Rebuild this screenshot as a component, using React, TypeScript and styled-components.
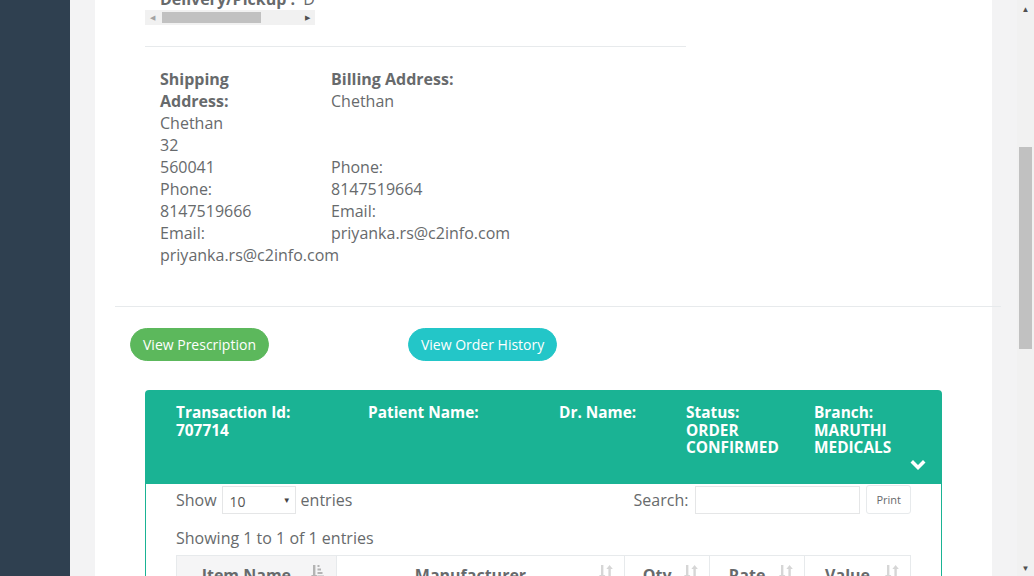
import React, { useLayoutEffect, useRef, useState } from "react";
import styled, { createGlobalStyle } from "styled-components";

const GlobalStyle = createGlobalStyle`
  * { box-sizing: border-box; }
  html, body { margin: 0; padding: 0; }
  body {
    font-family: "Open Sans", "Liberation Sans", sans-serif;
    font-size: 16px;
    color: #676a6c;
    background: #f3f3f4;
    padding-right: 17px;
  }
`;

const Layout = styled.div`
  display: flex;
  min-height: 1545px;
`;

const SideNav = styled.nav`
  width: 70px;
  flex-shrink: 0;
  background: #2f4050;
`;

const PageWrapper = styled.main`
  flex: 1;
  min-width: 0;
  display: flex;
  flex-direction: column;
  padding: 0 25px;
`;

const TopBar = styled.header`
  height: 60px;
  border-bottom: 1px solid #e7eaec;
  margin: 0 -25px 20px;
`;

const Card = styled.section`
  flex: 1;
  background: #fff;
  padding: 20px 20px 40px;
`;

const InfoBlock = styled.div`
  width: 541px;
  margin: 0 30px;
`;

const Title = styled.h3`
  margin: 23px 0 20px;
  padding: 0 15px;
  font-size: 18px;
  font-weight: 600;
`;

const InfoRow = styled.div`
  padding: 0 15px;
  line-height: 22px;
  margin-bottom: 10px;
`;

const ScrollRow = styled.div`
  width: 170px;
  overflow: hidden;
  white-space: nowrap;
  padding-left: 15px;
  line-height: 22px;
`;

const Label = styled.b`
  font-weight: 700;
`;

/* the browser hides real scrollbars, so the classic ones are drawn */
const HBar = styled.div`
  width: 170px;
  height: 15px;
  background: #f1f1f1;
  display: flex;
  align-items: center;
`;

const HArrow = styled.span<{ $dim?: boolean }>`
  width: 15px;
  height: 15px;
  display: flex;
  align-items: center;
  justify-content: center;
  color: ${({ $dim }) => ($dim ? "#a3a3a3" : "#505050")};
  font-size: 7px;
`;

const HThumb = styled.span`
  width: 99px;
  height: 11px;
  margin-left: 2px;
  background: #c1c1c1;
`;

const HGap = styled.span`
  flex: 1;
`;

const Rule = styled.hr`
  border: 0;
  border-top: 1px solid #e7eaec;
  margin: 21px 0;
`;

const AddressGrid = styled.div`
  display: grid;
  grid-template-columns: 171px auto;
  padding-left: 15px;
  line-height: 22px;
`;

const AddressCol = styled.div<{ $narrow?: boolean }>`
  display: flex;
  flex-direction: column;
  padding-right: ${({ $narrow }) => ($narrow ? "50px" : "0")};
  white-space: ${({ $narrow }) => ($narrow ? "normal" : "nowrap")};
`;

const AddressHead = styled.strong`
  font-weight: 700;
`;

const Blank = styled.span`
  height: 22px;
`;

const WideRule = styled.hr`
  border: 0;
  border-top: 1px solid #e7eaec;
  margin: 40px -29px 21px 0;
`;

const ButtonRow = styled.div`
  display: flex;
  gap: 139px;
  padding-left: 15px;
`;

const PillButton = styled.button<{ $tone: "success" | "info" }>`
  height: 33px;
  padding: 0 12px;
  border-radius: 17px;
  border: 1px solid ${({ $tone }) => ($tone === "success" ? "#5cb85c" : "#23c6c8")};
  background: ${({ $tone }) => ($tone === "success" ? "#5cb85c" : "#23c6c8")};
  color: #fff;
  font-family: "Open Sans", "Liberation Sans", sans-serif;
  font-size: 14px;
  cursor: pointer;
`;

const Panel = styled.div`
  margin: 29px 30px 0;
`;

const PanelHeading = styled.div`
  position: relative;
  height: 94px;
  padding: 14px 30px 0 31px;
  background: #1ab394;
  border-radius: 4px 4px 0 0;
  color: #fff;
  display: grid;
  grid-template-columns: 192px 191px 127px 128px 1fr;
  align-items: start;
`;

const HeadCell = styled.div`
  font-size: 15.4px;
  font-weight: 700;
  line-height: 17.5px;
`;

const Toggle = styled.span`
  position: absolute;
  right: 16px;
  bottom: 13px;
  display: flex;
`;

const PanelBody = styled.div`
  border: 1px solid #1ab394;
  border-top: 0;
  padding: 0 30px 30px;
`;

const Controls = styled.div`
  display: flex;
  justify-content: space-between;
  align-items: center;
  padding-top: 1px;
`;

const ControlGroup = styled.label`
  display: flex;
  align-items: center;
  gap: 5px;
  line-height: 22px;
  padding-bottom: 2px;
`;

const Select = styled.div`
  position: relative;
  width: 74px;
  height: 28px;
  border: 1px solid #e5e6e7;
  font-size: 14px;
  line-height: 26px;
  padding: 2px 0 0 7px;
  color: #555;
`;

const Caret = styled.span`
  position: absolute;
  right: 4px;
  top: 0;
  font-size: 8px;
  color: #444;
`;

const SearchInput = styled.input`
  width: 165px;
  height: 28px;
  border: 1px solid #e5e6e7;
  margin-left: 2px;
  font-family: inherit;
`;

const PrintButton = styled.button`
  height: 29px;
  margin-left: 1px;
  padding: 0 9px;
  background: #fff;
  border: 1px solid #e7eaec;
  border-radius: 3px;
  font-family: "Open Sans", "Liberation Sans", sans-serif;
  font-size: 11px;
  color: #676a6c;
`;

const InfoText = styled.div`
  margin-top: 11px;
  line-height: 22px;
`;

const Table = styled.table`
  width: 735px;
  margin-top: 6px;
  border-collapse: collapse;
  border: 1px solid #e7eaec;
`;

const Th = styled.th<{ $sorted?: boolean; $w: number }>`
  position: relative;
  width: ${({ $w }) => $w}px;
  padding: 8px 30px 8px 10px;
  border: 1px solid #e7eaec;
  background: ${({ $sorted }) => ($sorted ? "#f5f5f6" : "#fff")};
  font-size: 16px;
  font-weight: 700;
  line-height: 22px;
  text-align: center;
`;

const SortIcon = styled.span`
  position: absolute;
  right: 11px;
  top: 8px;
  display: flex;
`;

const Td = styled.td`
  padding: 8px 10px;
  border: 1px solid #e7eaec;
  line-height: 22px;
  text-align: center;
`;

const VRail = styled.div`
  position: fixed;
  top: 0;
  right: 0;
  width: 17px;
  height: 100vh;
  background: #f1f1f1;
  display: flex;
  flex-direction: column;
`;

const VArrow = styled.span`
  height: 17px;
  display: flex;
  align-items: center;
  justify-content: center;
  color: #505050;
  font-size: 8px;
`;

const VTrack = styled.div`
  position: relative;
  flex: 1;
`;

const VThumb = styled.div`
  position: absolute;
  left: 2px;
  right: 2px;
  background: #c1c1c1;
`;

const SortBoth = () => (
  <svg width="14" height="16" viewBox="0 0 14 16" fill="#d6d6d6">
    <rect x="2" y="1" width="2.4" height="12" />
    <path d="M0 11h6.4l-3.2 4z" />
    <rect x="9.4" y="3" width="2.4" height="12" />
    <path d="M7.4 5h6.4l-3.2-4z" />
  </svg>
);

const SortAttr = () => (
  <svg width="14" height="16" viewBox="0 0 14 16" fill="#b4b4b4">
    <rect x="2" y="1" width="2.4" height="12" />
    <path d="M0 11h6.4l-3.2 4z" />
    <rect x="6.5" y="1" width="2" height="2" />
    <rect x="6.5" y="4.5" width="3.5" height="2" />
    <rect x="6.5" y="8" width="5" height="2" />
    <rect x="6.5" y="11.5" width="6.5" height="2" />
  </svg>
);

const ChevronDown = () => (
  <svg width="16" height="12" viewBox="0 0 16 12" fill="#fff">
    <path d="M0.5 3.5 L3 1 L8 6 L13 1 L15.5 3.5 L8 11 Z" />
  </svg>
);

const columns = [
  { label: "Item Name", w: 160, sorted: true },
  { label: "Manufacturer", w: 289 },
  { label: "Qty", w: 85 },
  { label: "Rate", w: 95 },
  { label: "Value", w: 106 },
];

const App = () => {
  const ruleRef = useRef<HTMLHRElement>(null);
  const [thumb, setThumb] = useState({ top: 129, height: 202 });

  useLayoutEffect(() => {
    const el = ruleRef.current;
    if (!el) return;
    const y = el.getBoundingClientRect().top + window.scrollY - 46;
    window.scrollTo(0, y);
    const docH = document.documentElement.scrollHeight;
    const track = window.innerHeight - 34;
    setThumb({
      top: Math.round((window.scrollY / docH) * track),
      height: Math.round((window.innerHeight / docH) * track),
    });
  }, []);

  return (
    <>
      <GlobalStyle />
      <Layout>
        <SideNav />
        <PageWrapper>
          <TopBar />
          <Card>
            <InfoBlock>
              <Title>Order Details</Title>
              <InfoRow>
                <Label>Order Id :</Label> 707714
              </InfoRow>
              <InfoRow>
                <Label>Order Date :</Label> 12-03-2019
              </InfoRow>
              <InfoRow>
                <Label>Customer :</Label> Chethan
              </InfoRow>
              <InfoRow>
                <Label>Mobile :</Label> 8147519666
              </InfoRow>
              <InfoRow>
                <Label>Payment Mode :</Label> COD
              </InfoRow>
              <InfoRow>
                <Label>Order Status :</Label> ORDER CONFIRMED
              </InfoRow>
              <ScrollRow>
                <Label>Delivery/Pickup :</Label>&nbsp; Delivery
              </ScrollRow>
              <HBar>
                <HArrow $dim>◀</HArrow>
                <HThumb />
                <HGap />
                <HArrow>▶</HArrow>
              </HBar>
              <Rule ref={ruleRef} />
              <AddressGrid>
                <AddressCol $narrow>
                  <AddressHead>Shipping Address:</AddressHead>
                  <span>Chethan</span>
                  <span>32</span>
                  <span>560041</span>
                  <span>Phone:</span>
                  <span>8147519666</span>
                  <span>Email:</span>
                  <span>priyanka.rs@c2info.com</span>
                </AddressCol>
                <AddressCol>
                  <AddressHead>Billing Address:</AddressHead>
                  <span>Chethan</span>
                  <Blank />
                  <Blank />
                  <span>Phone:</span>
                  <span>8147519664</span>
                  <span>Email:</span>
                  <span>priyanka.rs@c2info.com</span>
                </AddressCol>
              </AddressGrid>
            </InfoBlock>

            <WideRule />

            <ButtonRow>
              <PillButton $tone="success">View Prescription</PillButton>
              <PillButton $tone="info">View Order History</PillButton>
            </ButtonRow>

            <Panel>
              <PanelHeading>
                <HeadCell>
                  Transaction Id:
                  <br />
                  707714
                </HeadCell>
                <HeadCell>Patient Name:</HeadCell>
                <HeadCell>Dr. Name:</HeadCell>
                <HeadCell>
                  Status:
                  <br />
                  ORDER
                  <br />
                  CONFIRMED
                </HeadCell>
                <HeadCell>
                  Branch:
                  <br />
                  MARUTHI
                  <br />
                  MEDICALS
                </HeadCell>
                <Toggle>
                  <ChevronDown />
                </Toggle>
              </PanelHeading>
              <PanelBody>
                <Controls>
                  <ControlGroup>
                    Show
                    <Select>
                      10
                      <Caret>▼</Caret>
                    </Select>
                    entries
                  </ControlGroup>
                  <ControlGroup>
                    Search:
                    <SearchInput type="search" />
                    <PrintButton>Print</PrintButton>
                  </ControlGroup>
                </Controls>
                <InfoText>Showing 1 to 1 of 1 entries</InfoText>
                <Table>
                  <thead>
                    <tr>
                      {columns.map((c) => (
                        <Th key={c.label} $w={c.w} $sorted={c.sorted}>
                          {c.label}
                          <SortIcon>{c.sorted ? <SortAttr /> : <SortBoth />}</SortIcon>
                        </Th>
                      ))}
                    </tr>
                  </thead>
                  <tbody>
                    <tr>
                      <Td>Dolo 650</Td>
                      <Td>Micro Labs Ltd</Td>
                      <Td>2</Td>
                      <Td>30.00</Td>
                      <Td>60.00</Td>
                    </tr>
                  </tbody>
                </Table>
              </PanelBody>
            </Panel>
          </Card>
        </PageWrapper>
      </Layout>
      <VRail>
        <VArrow>▲</VArrow>
        <VTrack>
          <VThumb style={{ top: thumb.top, height: thumb.height }} />
        </VTrack>
        <VArrow>▼</VArrow>
      </VRail>
    </>
  );
};

export default App;
